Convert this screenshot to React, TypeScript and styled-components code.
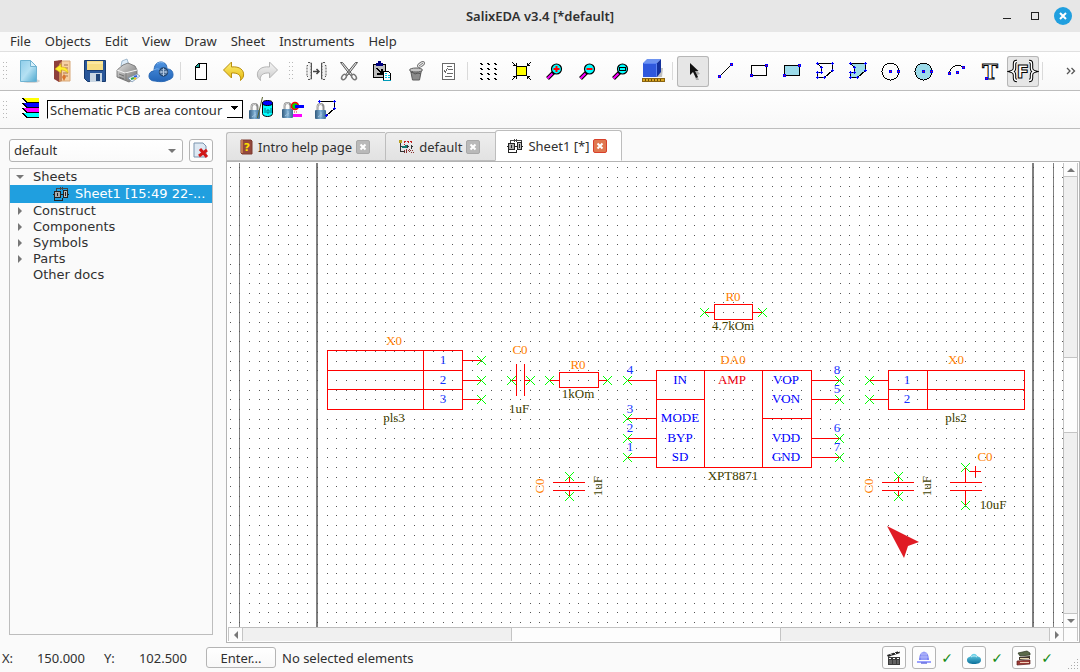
import React from "react";
import styled, { createGlobalStyle, css } from "styled-components";

const UI = `"Noto Sans", "Open Sans", sans-serif`;

const GlobalStyle = createGlobalStyle`
  * { box-sizing: border-box; }
  body { margin: 0; background: #fafafa; color: #303030; font: 13px/16px ${UI}; }
  button, select { font: inherit; color: inherit; margin: 0; padding: 0; }
  svg { display: block; }
`;

const Window = styled.div`
  display: flex;
  flex-direction: column;
  min-height: 100vh;
  background: #fafafa;
`;

/* ---------- title and menu ---------- */

const TitleBar = styled.header`
  display: grid;
  grid-template-columns: 1fr auto 1fr;
  align-items: center;
  height: 32px;
  background: #e7e7e7;
`;

const Title = styled.h1`
  grid-column: 2;
  margin: 0;
  font-size: 13px;
  line-height: 16px;
  font-weight: 600;
`;

const WindowButtons = styled.div`
  display: flex;
  justify-content: flex-end;
  align-items: center;
  gap: 10px;
  padding-right: 8px;
`;

const WindowButton = styled.button`
  width: 18px;
  height: 18px;
  border: 0;
  background: none;
`;

const MenuBar = styled.nav`
  display: flex;
  align-items: center;
  gap: 14px;
  height: 20px;
  padding: 0 10px 2px;
  border-bottom: 1px solid #e0e0e0;
`;

const MenuItem = styled.button`
  border: 0;
  background: none;
  white-space: nowrap;
`;

/* ---------- tool bars ---------- */

const ToolBar = styled.div<{ $tall?: boolean }>`
  display: flex;
  align-items: center;
  gap: 1px;
  height: ${(p) => (p.$tall ? 39 : 38)}px;
  border-bottom: 1px solid #bdbdbd;
  background: linear-gradient(#ffffff, #f8f8f8);
`;

const Handle = styled.span<{ $wide?: boolean }>`
  display: flex;
  justify-content: center;
  width: ${(p) => (p.$wide ? 15 : 12)}px;
`;

const Separator = styled.span`
  width: 6px;
  height: 18px;
  border-right: 3px solid transparent;
  border-left: 2px solid transparent;
  background: #dadada;
  background-clip: padding-box;
`;

const ToolButton = styled.button<{ $pressed?: boolean }>`
  flex: none;
  width: 32px;
  height: 31px;
  border: 0;
  border-radius: 3px;
  background: none;
  ${(p) =>
    p.$pressed &&
    css`
      background: #e6e6e6;
      box-shadow: inset 0 0 0 1px #b6b6b6;
    `}
`;

const More = styled.button`
  margin-left: auto;
  padding-right: 4px;
  border: 0;
  background: none;
`;

const LayerBox = styled.div`
  position: relative;
  width: 196px;
  height: 19px;
  margin-left: 1px;
  border: 1px solid #000;
  border-bottom-color: #fff;
  background: #fff;
`;

const LayerSelect = styled.select`
  appearance: none;
  width: 100%;
  height: 17px;
  border: 0;
  padding-left: 2px;
  background: none;
  line-height: 16px;
`;

const LayerArrow = styled.svg`
  position: absolute;
  right: -1px;
  top: -1px;
  pointer-events: none;
`;

/* ---------- body ---------- */

const Body = styled.main`
  flex: 1;
  display: flex;
  min-height: 0;
`;

const Side = styled.aside`
  flex: none;
  display: flex;
  flex-direction: column;
  gap: 6px;
  width: 226px;
  padding: 10px 13px 8px 9px;
`;

const ProjectRow = styled.div`
  display: flex;
  gap: 6px;
`;

const ProjectBox = styled.div`
  position: relative;
  flex: 1;
  svg {
    position: absolute;
    right: 7px;
    top: 8px;
    pointer-events: none;
  }
`;

const ProjectSelect = styled.select`
  appearance: none;
  width: 100%;
  height: 23px;
  padding: 0 0 2px 4px;
  border: 1px solid #b4b4b4;
  border-radius: 3px;
  background: linear-gradient(#ffffff, #fafafa);
`;

const SmallButton = styled.button`
  display: grid;
  place-items: center;
  width: 24px;
  height: 23px;
  border: 1px solid #b4b4b4;
  border-radius: 3px;
  background: #fdfdfd;
`;

const Tree = styled.ul`
  flex: 1;
  margin: 0;
  padding: 0;
  list-style: none;
  border: 1px solid #bdbdbd;
  font: 13px/16px "DejaVu Sans", sans-serif;
`;

const TreeRow = styled.li<{ $selected?: boolean }>`
  display: flex;
  align-items: center;
  gap: ${(p) => (p.$selected ? 6 : 5)}px;
  height: ${(p) => (p.$selected ? 18 : 16)}px;
  padding-left: ${(p) => (p.$selected ? 43 : 6)}px;
  white-space: nowrap;
  background: ${(p) => (p.$selected ? "#209fdf" : "none")};
  color: ${(p) => (p.$selected ? "#fff" : "inherit")};
`;

const TreeMark = styled.span`
  width: 12px;
  height: 9px;
`;

const Document = styled.section`
  flex: 1;
  display: flex;
  flex-direction: column;
  min-width: 0;
`;

const Tabs = styled.div`
  display: flex;
  align-items: flex-end;
  height: 32px;
`;

const Tab = styled.div<{ $active?: boolean }>`
  display: flex;
  align-items: center;
  gap: 4px;
  height: 29px;
  padding: 0 15px 0 12px;
  border: 1px solid #bdbdbd;
  border-right-width: 0;
  border-radius: 3px 0 0 0;
  background: linear-gradient(#eeeeee, #e2e2e2);
  ${(p) =>
    p.$active &&
    css`
      height: 31px;
      padding: 0 14px 0 11px;
      border-right-width: 1px;
      border-bottom-color: #fff;
      border-radius: 3px 3px 0 0;
      background: #fff;
    `}
`;

const TabLabel = styled.button`
  display: flex;
  align-items: center;
  gap: 5px;
  border: 0;
  background: none;
  white-space: nowrap;
`;

const TabClose = styled.button<{ $active?: boolean }>`
  display: grid;
  place-items: center;
  width: 14px;
  height: 14px;
  border: 1px solid ${(p) => (p.$active ? "#d8402a" : "#a8a8a8")};
  border-radius: 2px;
  background: ${(p) => (p.$active ? "#e07850" : "#b9b9b9")};
`;

const Pane = styled.div`
  flex: 1;
  display: grid;
  grid-template-columns: minmax(0, 1fr) 15px;
  grid-template-rows: minmax(0, 1fr) 15px;
  border: 1px solid #b4b4b4;
  border-width: 1px 1px 1px 2px;
  outline: 1px solid #fff;
  outline-offset: -2px;
  padding: 1px 1px 0 1px;
  background: #fff;
`;

const Canvas = styled.svg`
  width: 100%;
  height: 100%;
  background: #fff;
  text {
    font: 13px "Liberation Serif", serif;
    text-anchor: middle;
  }
`;

const Scroll = styled.div<{ $vertical?: boolean }>`
  display: flex;
  flex-direction: ${(p) => (p.$vertical ? "column" : "row")};
  background: #f0f0f0;
  border: 0 solid #bdbdbd;
  border-width: ${(p) => (p.$vertical ? "0 1px 0 1px" : "1px 0")};
`;

const ScrollButton = styled.button`
  display: grid;
  place-items: center;
  width: 13px;
  height: 13px;
  border: 0;
  background: #fcfcfc;
  box-shadow: 0 0 0 1px #c4c4c4;
`;

const Track = styled.span<{ $grow: number }>`
  flex: ${(p) => p.$grow} 1 0;
`;

const Thumb = styled(Track)`
  background: #fdfdfd;
  box-shadow: 0 0 0 1px #c4c4c4;
`;

const Corner = styled.div`
  border: 1px solid #c4c4c4;
  background: #fcfcfc;
`;

/* ---------- status bar ---------- */

const StatusBar = styled.footer`
  display: flex;
  align-items: center;
  height: 29px;
  padding-left: 2px;
`;

const Coordinate = styled.div`
  display: flex;
  justify-content: space-between;
  width: 83px;
  margin-right: 19px;
`;

const EnterButton = styled.button`
  width: 70px;
  height: 21px;
  margin-right: 6px;
  border: 1px solid #b4b4b4;
  border-radius: 3px;
  background: linear-gradient(#ffffff, #f8f8f8);
`;

const StatusIcons = styled.div`
  display: flex;
  align-items: center;
  gap: 6px;
  margin-left: auto;
`;

const Check = styled.span`
  width: 14px;
  margin: 0 2px 0 -2px;
  text-align: center;
  color: #128a12;
  font: 14px/16px "DejaVu Sans", sans-serif;
`;

/* ---------- icons ---------- */

const Icon = ({ children, crisp }: { children: React.ReactNode; crisp?: boolean }) => (
  <svg width="32" height="31" viewBox="0 0 32 31" fill="none" shapeRendering={crisp ? "crispEdges" : undefined}>
    {children}
  </svg>
);

const Node = ({ x, y }: { x: number; y: number }) => (
  <>
    <rect x={x - 1} y={y - 1} width="3" height="3" fill="#00f" />
    <rect x={x} y={y} width="1" height="1" fill="#f00" />
  </>
);

const Plus = ({ x, y }: { x: number; y: number }) => (
  <path d={`M${x - 1} ${y + 0.5}h3M${x + 0.5} ${y - 1}v3`} stroke="#00f" />
);

const Lock = ({ x, y }: { x: number; y: number }) => (
  <g transform={`translate(${x} ${y})`}>
    <path d="M2.500 8V4a3 3 0 0 1 6 0v4" stroke="#8d8d8d" strokeWidth="2" />
    <path d="M2 8V4a3.500 3.500 0 0 1 5-2.500" stroke="#d6d6d6" strokeWidth="1" />
    <rect x="0" y="7" width="11" height="9" rx="1" fill="url(#lockBody)" />
    <path d="M6 9v5M3 14l4-3" stroke="#9fc3de" />
  </g>
);

const Grip = () => (
  <svg width="6" height="18" shapeRendering="crispEdges">
    {[1, 5, 9, 13, 17].map((y) => (
      <path key={y} d={`M0 ${y - 0.5}h1M3 ${y - 0.5}h1`} stroke="#b8b8b8" />
    ))}
  </svg>
);

const Gradients = () => (
  <svg width="0" height="0" style={{ position: "absolute" }} aria-hidden="true">
    <defs>
      <linearGradient id="page" x1="0" y1="0" x2="1" y2="1">
        <stop offset="0" stopColor="#8fcdea" />
        <stop offset=".5" stopColor="#b5e1f3" />
        <stop offset="1" stopColor="#4fa9cf" />
      </linearGradient>
      <linearGradient id="lockBody" x1="0" x2="1">
        <stop offset="0" stopColor="#31597c" />
        <stop offset=".5" stopColor="#7fb0d4" />
        <stop offset="1" stopColor="#3a6a94" />
      </linearGradient>
      <linearGradient id="gold" x1="0" y1="0" x2="0" y2="1">
        <stop offset="0" stopColor="#fff27a" />
        <stop offset="1" stopColor="#e5b80b" />
      </linearGradient>
      <linearGradient id="silver" x1="0" y1="0" x2="0" y2="1">
        <stop offset="0" stopColor="#f6f6f6" />
        <stop offset="1" stopColor="#c9c9c9" />
      </linearGradient>
      <linearGradient id="sky" x1="0" y1="0" x2="0" y2="1">
        <stop offset="0" stopColor="#4f93e0" />
        <stop offset="1" stopColor="#2264b8" />
      </linearGradient>
      <linearGradient id="metal" x1="0" y1="0" x2="1" y2="1">
        <stop offset="0" stopColor="#e2e2e2" />
        <stop offset="1" stopColor="#6d6d6d" />
      </linearGradient>
      <linearGradient id="teal" x1="0" y1="0" x2="0" y2="1">
        <stop offset="0" stopColor="#6fd8ee" />
        <stop offset="1" stopColor="#0a6f9a" />
      </linearGradient>
    </defs>
  </svg>
);

const NewIcon = () => (
  <Icon>
    <ellipse cx="18" cy="25" rx="9" ry="2" fill="#bbb" opacity=".6" />
    <path d="M7.500 4.500h10l6 6v15h-16z" fill="url(#page)" stroke="#6fb3d2" />
    <path d="M17.500 4.500v6h6z" fill="#d8f0fa" stroke="#6fb3d2" />
  </Icon>
);

const ImportIcon = () => (
  <Icon>
    <path d="M12 5h12v20H12z" fill="#f6d0a2" stroke="#d8a878" />
    <path d="M18 9h4M19 12h3M17 17h5M18 20h4" stroke="#a8744a" />
    <path d="M8 5l8-1v20l-3 2-5-3z" fill="#8e3f3b" />
    <path d="M13 8l3-3v20l-3 1z" fill="#c98a5c" />
    <path d="M9 13l6-5v3c5 0 7 2 7 6-2-2-4-3-7-3v3z" fill="#ffee2e" stroke="#d0a818" strokeWidth=".6" />
    <path d="M18 18l2 3-2 4-2-4z" fill="#d9742e" />
  </Icon>
);

const SaveIcon = () => (
  <Icon>
    <path d="M5.500 4.500h21v21h-18l-3-3z" fill="#2a5799" stroke="#173a6e" />
    <rect x="8" y="5" width="16" height="9" fill="#f6dd84" />
    <path d="M8 7h16" stroke="#fff3c0" />
    <rect x="11" y="17" width="12" height="9" fill="#c9d6e2" />
    <rect x="17" y="18" width="4" height="7" fill="#1f4478" />
    <path d="M8 14.500h16" stroke="#173a6e" />
  </Icon>
);

const PrintIcon = () => (
  <Icon>
    <path d="M9 10l1-5 5-2 2 6z" fill="#dcebf8" stroke="#8ea9c2" strokeWidth=".8" />
    <path d="M5 14l6-5 5-2 7 3 2 4v7l-8 5-12-5z" fill="url(#metal)" stroke="#6a6a6a" strokeWidth=".8" />
    <path d="M5 14l8 3 12-3" stroke="#f5f5f5" />
    <path d="M14 17v8" stroke="#7d7d7d" />
    <path d="M7 18l5 2M7 21l5 2" stroke="#555" strokeWidth=".7" />
    <path d="M16 22l9-4 3 2-8 6z" fill="#e8f2fb" stroke="#6d8aa8" strokeWidth=".7" />
    <path d="M19 23l3-1" stroke="#27a844" strokeWidth="2" />
    <path d="M22 21l3-1" stroke="#2d5be0" strokeWidth="2" />
    <path d="M22 23l2-1" stroke="#f0c420" strokeWidth="2" />
  </Icon>
);

const CloudIcon = () => (
  <Icon>
    <path
      d="M10 25c-4 0-6-2-6-5s2-5 5-5c0-5 2-9 7-9 4 0 6 3 6 7 4 0 6 2 6 6 0 3-2 4-5 5-3 2-9 2-13 1z"
      fill="url(#sky)"
      stroke="#2a69b5"
    />
    <path d="M9 14c3-2 5-1 6 0M12 8c2-2 5-2 7-1" stroke="#7db4ee" />
    <circle cx="18.500" cy="16" r="4" fill="#7f9fc4" stroke="#23466f" strokeWidth="1.500" />
    <path d="M16 13.500l5 5M21 13.500l-5 5" stroke="#23466f" />
    <path d="M18.500 12v8M14.500 16h8" stroke="#c5d8ee" strokeWidth=".8" />
  </Icon>
);

const SheetIcon = () => (
  <Icon crisp>
    <path d="M13.500 7.500h8v16h-11v-13z" fill="#fff" stroke="#000" />
    <path d="M14 7v4h-4z" fill="#1aa39a" />
    <path d="M10 11.500h4.500V7" stroke="#000" />
  </Icon>
);

const ArrowShape = ({ fill, stroke }: { fill: string; stroke: string }) => (
  <path
    d="M5.500 14l8-8v5c8-1 13 3 12 9-.5 2-1.500 3-3 4.500 1-5-2.500-8-9-7.500v5z"
    fill={fill}
    stroke={stroke}
    strokeLinejoin="round"
  />
);

const UndoIcon = () => (
  <Icon>
    <ArrowShape fill="url(#gold)" stroke="#b98f10" />
  </Icon>
);

const RedoIcon = () => (
  <Icon>
    <g transform="translate(32 0) scale(-1 1)">
      <ArrowShape fill="url(#silver)" stroke="#b5b5b5" />
    </g>
  </Icon>
);

const MirrorIcon = () => (
  <Icon>
    <path d="M8.500 6.500h2v17h-2zM23.500 6.500h2v17h-2z" fill="#eee" />
    <path d="M8 6.500h3v17H8M8 9.500h-1v11h1M25 6.500h-3v17h3M25 9.500h1v11h-1" stroke="#555" strokeDasharray="2 1" />
    <path d="M11.500 7v16M21.500 7v16" stroke="#555" />
    <path d="M13 15.500h6M16.500 13l2.500 2.500-2.500 2.500" stroke="#444" strokeWidth="1.500" />
  </Icon>
);

const CutIcon = () => (
  <Icon>
    <path d="M7.500 6.500h2l9 11-1 2zM24.500 6.500h-2l-9 11 1 2z" fill="#e8e8e8" stroke="#555" />
    <ellipse cx="11" cy="21" rx="2" ry="3" transform="rotate(35 11 21)" stroke="#777" strokeWidth="1.500" />
    <ellipse cx="21" cy="21" rx="2" ry="3" transform="rotate(-35 21 21)" stroke="#777" strokeWidth="1.500" />
  </Icon>
);

const PasteIcon = () => (
  <Icon crisp>
    <path d="M7.500 8.500h12v13h-12z" fill="#bdbdbd" stroke="#000" />
    <path d="M10 7h2V5h3v2h2v3h-7z" fill="#000080" />
    <path d="M10.500 12l5 5M16 13v5h-5" stroke="#000" strokeWidth="2" />
    <path d="M17.500 15.500h5l2 2v7h-7z" fill="#fff" stroke="#000" />
    <path d="M19 17.500h3M19 19.500h5M19 21.500h5" stroke="#00c8e8" strokeDasharray="2 1" />
    <path d="M17 24.500h8" stroke="#009ab8" />
  </Icon>
);

const BucketIcon = () => (
  <Icon>
    <path d="M11.500 14h11l-2 10h-7z" fill="#8b8b8b" stroke="#5d5d5d" />
    <ellipse cx="17" cy="14" rx="6.500" ry="2" fill="#c6c6c6" stroke="#5d5d5d" />
    <path d="M12 17l1-1 3 2 3-1 3 1" stroke="#555" />
    <ellipse cx="22" cy="8.500" rx="4" ry="2" transform="rotate(-35 22 8.500)" fill="#eee" stroke="#777" />
    <path d="M20 10l4-3" stroke="#777" />
  </Icon>
);

const ListIcon = () => (
  <Icon crisp>
    <path d="M10.500 7.500h12v16h-12z" fill="#fff" stroke="#6a6a6a" />
    <path d="M15 10.500h5M16 13.500h5M15 17.500h6M13 20.500h7" stroke="#6a6a6a" />
    <path d="M12 14l1.500 2 2-4" stroke="#6a6a6a" />
  </Icon>
);

const GridIcon = () => (
  <Icon crisp>
    {[8, 15, 22].map((x) =>
      [7, 12, 17, 22].map((y) => <path key={`${x}-${y}`} d={`M${x} ${y}h2v1h1v1h-2v-1h-1z`} fill="#000" />)
    )}
  </Icon>
);

const FitIcon = () => (
  <Icon crisp>
    <rect x="11.500" y="10.500" width="10" height="9" fill="#ff0" stroke="#000" />
    <path
      d="M7 6l4 4M8 9.500h3V7M26 6l-4 4M25 9.500h-3V7M7 24l4-4M8 20.500h3V23M26 24l-4-4M25 20.500h-3V23"
      stroke="#000"
    />
  </Icon>
);

const Magnifier = ({ children }: { children: React.ReactNode }) => (
  <Icon>
    <path d="M9.500 22.500l6-6" stroke="#000" strokeWidth="4" />
    <path d="M9.500 22.500l5-5" stroke="#f0f" strokeWidth="2" />
    <circle cx="18.500" cy="13" r="5" fill="#0ff" stroke="#000" strokeWidth="1.200" />
    {children}
  </Icon>
);

const CubeIcon = () => (
  <Icon>
    <path d="M20 12l6 0-1 9h-5z" fill="#999" opacity=".6" />
    <path d="M6 7l4-4h14l-4 4z" fill="#6d93f0" />
    <path d="M6 7h14v14H6z" fill="#2f58dc" />
    <path d="M20 7l4-4v13l-4 5z" fill="#14319c" />
    <path d="M6.500 7.500h13v13" stroke="#5b83f2" />
    <rect x="5.500" y="22.500" width="22" height="3" fill="#d8a520" stroke="#8a6410" />
    <path d="M8.500 23v2M11.500 23v2M14.500 23v2M17.500 23v2M20.500 23v2M23.500 23v2" stroke="#6d4d08" />
  </Icon>
);

const PointerIcon = () => (
  <Icon>
    <path d="M15 9l8 9-3 1 2 5h-3z" fill="#aaa" />
    <path d="M13 7v12l3-3 3 6 2-1-3-6h3.500z" fill="#111" />
  </Icon>
);

const LineIcon = () => (
  <Icon crisp>
    <path d="M9.500 20.500l12-12" stroke="#000" />
    <Node x={9} y={20} />
    <Node x={21} y={8} />
  </Icon>
);

const RectIcon = ({ fill = "none" }: { fill?: string }) => (
  <Icon crisp>
    <rect x="8.500" y="9.500" width="15" height="10" fill={fill} stroke="#000" />
    <Node x={8} y={19} />
    <Node x={23} y={9} />
  </Icon>
);

const polygon = [
  [8, 7],
  [23, 7],
  [23, 14],
  [15, 21],
  [8, 21],
  [8, 16],
  [12, 16],
  [12, 11],
];

const PolyIcon = ({ fill = "none" }: { fill?: string }) => (
  <Icon crisp>
    <polygon points={polygon.map(([x, y]) => `${x + 0.5},${y + 0.5}`).join(" ")} fill={fill} stroke="#000" />
    {polygon.map(([x, y]) => (
      <Plus key={`${x}-${y}`} x={x} y={y} />
    ))}
  </Icon>
);

const CircleIcon = ({ fill = "none" }: { fill?: string }) => (
  <Icon crisp>
    <circle cx="15.500" cy="15.500" r="8.500" fill={fill} stroke="#000" />
    <Node x={15} y={15} />
    <Node x={23} y={15} />
  </Icon>
);

const ArcIcon = () => (
  <Icon crisp>
    <path d="M8.500 17.500a8.500 8.500 0 0 1 14-6" stroke="#000" />
    <Node x={8} y={17} />
    <Node x={16} y={16} />
    <Node x={22} y={11} />
  </Icon>
);

const TextIcon = () => (
  <Icon>
    <text
      x="16"
      y="23"
      textAnchor="middle"
      fontFamily="DejaVu Serif"
      fontWeight="700"
      fontSize="21"
      fill="#fff"
      stroke="#000"
    >
      T
    </text>
    <Node x={12} y={22} />
  </Icon>
);

const braces =
  "M10 5.500H9.500C7.500 5.500 7.500 7 7.500 8v4c0 2-1 3-2.500 3.500 1.500.5 2.500 1.500 2.500 3.500v3c0 1.500.5 2.500 2.500 2.500M22 5.500h.5c2 0 2 1.500 2 2.500v4c0 2 1 3 2.500 3.500-1.500.5-2.500 1.500-2.500 3.500v3c0 1.500-.5 2.500-2.500 2.500";

const FieldIcon = () => (
  <Icon>
    <path d={braces} stroke="#000" strokeWidth="3.400" />
    <path d={braces} stroke="#fff" strokeWidth="1.400" />
    <text
      x="16"
      y="22"
      textAnchor="middle"
      fontFamily="DejaVu Sans"
      fontWeight="700"
      fontSize="18"
      fill="#fff"
      stroke="#000"
    >
      F
    </text>
  </Icon>
);

const LayersIcon = () => (
  <Icon crisp>
    {["#ff0", "#00f", "#f0f", "#0ff"].map((c, i) => (
      <g key={c} transform={`translate(0 ${i * 5})`}>
        <path d="M10 4h16v4H14z" fill={c} />
        <path d="M9 4.500h2M10 4.500l4 4h12" stroke="#000" />
      </g>
    ))}
  </Icon>
);

const LockNetIcon = () => (
  <Icon>
    <Lock x={5} y={9} />
    <path d="M18.500 3l-5 21" stroke="#55602a" />
    <path d="M18.500 9.500v10c0 4 10 4 10 0v-10z" fill="#0ff" stroke="#000" />
    <ellipse cx="23.500" cy="9" rx="5" ry="2.500" fill="#00f" stroke="#000" />
    <path d="M21 14v5M23 16v3h2v-3h-2M27 14v5" stroke="#078" />
  </Icon>
);

const LockLayerIcon = () => (
  <Icon>
    <Lock x={5} y={8} />
    <circle cx="18" cy="12" r="3.500" fill="#0d0" stroke="#f00" strokeWidth="1.500" />
    <rect x="18" y="11" width="9" height="3" fill="#00f" />
    <rect x="16" y="20" width="9" height="3" fill="#f0f" />
    <path d="M17 18h4" stroke="#c33" strokeDasharray="1 1" />
  </Icon>
);

const LockAreaIcon = () => (
  <Icon>
    <path d="M9.500 7.500h15v7l-8 7" stroke="#000" shapeRendering="crispEdges" />
    <Lock x={5} y={9} />
    <Plus x={9} y={7} />
    <Plus x={24} y={7} />
    <Plus x={24} y={14} />
    <Plus x={16} y={21} />
  </Icon>
);

const SheetGlyph = () => (
  <svg width="16" height="14" viewBox="0 0 16 14" fill="none" shapeRendering="crispEdges">
    <path d="M3 1.500h11v2M3 1.500v3M7 0v3M9 0v3" stroke="#444" />
    <rect x="1.500" y="4.500" width="6" height="6" fill="#aaa" stroke="#222" />
    <rect x="10.500" y="3.500" width="4" height="7" fill="#bbb" stroke="#222" />
    <path d="M4.500 6v3M12.500 5v4M0 7.500h2M7 7.500h4M14 7.500h2M1.500 10v3h8v-2" stroke="#222" />
  </svg>
);

const BookGlyph = () => (
  <svg width="14" height="16" viewBox="0 0 14 16" fill="none">
    <path d="M2 1h10l1 1v13H3l-1-1z" fill="#94483c" stroke="#7c3a2e" />
    <path d="M2 1h2v13H2z" fill="#c27a52" />
    <text x="8" y="12" textAnchor="middle" fontFamily="DejaVu Sans" fontSize="11" fontWeight="700" fill="#ffe100">
      ?
    </text>
  </svg>
);

const TreeGlyph = () => (
  <svg width="16" height="14" viewBox="0 0 16 14" fill="none" shapeRendering="crispEdges">
    <path d="M2.500 3v8.500H7M2.500 6.500H7" stroke="#333" />
    <rect x="1" y="0" width="3" height="3" fill="#b8a020" />
    <path d="M6 1.500h9M6.500 1v4M10.500 1v3M13.500 1v3" stroke="#c02020" strokeDasharray="2 1" />
    <path d="M4 6.500h4M7.500 5v3" stroke="#127a70" strokeWidth="2" />
    <path d="M10 6.500h1M13 6.500h2M9.500 5v3M13.500 5v4" stroke="#333" />
    <path d="M6 10.500h9M8.500 9v4M11.500 9v4M6 12.500h3M13 12.500h3" stroke="#8a3030" strokeDasharray="1 1" />
  </svg>
);

const CloseCross = () => (
  <svg width="8" height="8" viewBox="0 0 8 8">
    <path d="M1.500 1.500l5 5M6.500 1.500l-5 5" stroke="#fff" strokeWidth="2" />
  </svg>
);

const triangles = {
  left: "M6 0v8L2 4z",
  right: "M2 0v8l4-4z",
  up: "M0 6h8L4 2z",
  down: "M0 2h8L4 6z",
};

const Triangle = ({ dir }: { dir: keyof typeof triangles }) => (
  <svg width="8" height="8" viewBox="0 0 8 8">
    <path d={triangles[dir]} fill="#777" />
  </svg>
);

/* ---------- schematic ---------- */

const PITCH = 9.68;
const gridDots = (() => {
  let d = "";
  for (let row = 0; row < 110; row++) {
    const y = Math.floor(167.4 + row * PITCH);
    for (let col = -1; col < 220; col++) {
      d += `M${Math.floor(239.9 + col * PITCH)} ${y + 0.5}h1`;
    }
  }
  return d;
})();

const wires = [
  "M327.500 350.500h135v59h-135zM327 370.500h136M327 389.500h136M423.500 350v60",
  "M463 360.500h19M463 380.500h19M463 399.500h19",
  "M516.500 364v32M524.500 364v32M511 380.500h5M525 380.500h6",
  "M559.500 372.500h39v15h-39zM549 380.500h10M599 380.500h9",
  "M553 482.500h32M553 490.500h32M569.500 477v6M569.500 491v6",
  "M714.500 304.500h38v15h-38zM705 312.500h9M753 312.500h10",
  "M656.500 370.500h155v97h-155zM704.500 370v98M762.500 370v98M656 399.500h49M762 418.500h50",
  "M628 380.500h28M628 418.500h28M628 438.500h28M628 457.500h28",
  "M812 380.500h28M812 399.500h28M812 438.500h28M812 457.500h28",
  "M888.500 370.500h136v39h-136zM888 389.500h137M927.500 370v40M870 380.500h18M870 399.500h18",
  "M882 482.500h32M882 490.500h32M898.500 477v6M898.500 491v6",
  "M950 482.500h32M950 490.500h32M965.500 468v15M965.500 491v15M970 471.500h11M975.500 466v11",
].join("");

const pins = [
  [481, 360], [481, 380], [481, 399],
  [511, 380], [530, 380], [549, 380], [607, 380],
  [569, 476], [569, 496], [704, 312], [762, 312],
  [627, 380], [627, 418], [627, 438], [627, 457],
  [839, 380], [839, 399], [839, 438], [839, 457],
  [869, 380], [869, 399], [898, 476], [898, 496],
  [965, 467], [965, 505],
];

const pinMarks = pins.map(([x, y]) => `M${x - 4} ${y - 4}l9 9M${x + 5} ${y - 4}l-9 9`).join("");

const ORANGE = "#ff8000";
const OLIVE = "#404000";
const BLUE = "#0000ff";
const NUMBER = "#1433ff";

type Label = [string, number, number, string, boolean?];
const labels: Label[] = [
  ["X0", 394, 345, ORANGE], ["pls3", 394, 422, OLIVE],
  ["1", 443, 364, NUMBER], ["2", 443, 384, NUMBER], ["3", 443, 403, NUMBER],
  ["C0", 520, 354, ORANGE], ["1uF", 519, 413, OLIVE],
  ["R0", 578, 369, ORANGE], ["1kOm", 578, 398, OLIVE],
  ["C0", 544, 486, ORANGE, true], ["1uF", 602, 486, OLIVE, true],
  ["R0", 733, 301, ORANGE], ["4.7kOm", 733, 330, OLIVE],
  ["DA0", 733, 364, ORANGE], ["XPT8871", 733, 480, OLIVE],
  ["4", 630, 374, NUMBER], ["3", 630, 413, NUMBER], ["2", 630, 432, NUMBER], ["1", 630, 451, NUMBER],
  ["8", 837, 374, NUMBER], ["5", 837, 393, NUMBER], ["6", 837, 432, NUMBER], ["7", 837, 451, NUMBER],
  ["IN", 680, 384, BLUE], ["MODE", 680, 422, BLUE], ["BYP", 680, 442, BLUE], ["SD", 680, 461, BLUE],
  ["AMP", 732, 384, "#f00010"],
  ["VOP", 786, 384, BLUE], ["VON", 786, 403, BLUE], ["VDD", 786, 442, BLUE], ["GND", 786, 461, BLUE],
  ["X0", 956, 364, ORANGE], ["pls2", 956, 422, OLIVE],
  ["1", 907, 384, NUMBER], ["2", 907, 403, NUMBER],
  ["C0", 873, 486, ORANGE, true], ["1uF", 931, 486, OLIVE, true],
  ["C0", 985, 461, ORANGE], ["10uF", 993, 509, OLIVE],
];

const Schematic = () => (
  <Canvas>
    <g transform="translate(-229 -163)">
      <g shapeRendering="crispEdges" fill="none">
        <path d="M239.500 163v2000M1053.500 163v2000" stroke="#808080" />
        <path d="M317 163v2000M1033 163v2000" stroke="#808080" strokeWidth="2" />
        <path d={gridDots} stroke="#555" />
        <path d={wires} stroke="#f00" />
      </g>
      <path d={pinMarks} stroke="#0f0" fill="none" />
      {labels.map(([text, x, y, color, turned]) => (
        <text key={`${text}-${x}-${y}`} x={x} y={y} fill={color} transform={turned ? `rotate(-90 ${x} ${y})` : undefined}>
          {text}
        </text>
      ))}
      <path d="M887 526l32 16-11 4-4 12z" fill="#e01b24" />
    </g>
  </Canvas>
);

/* ---------- page ---------- */

const SKY = "#9cdbea";

type Tool = [string, React.ReactNode, boolean?] | "sep" | "grip";
const tools: Tool[] = [
  ["New", <NewIcon />],
  ["Open", <ImportIcon />],
  ["Save", <SaveIcon />],
  ["Print", <PrintIcon />],
  ["Cloud", <CloudIcon />],
  "sep",
  ["Sheet", <SheetIcon />],
  ["Undo", <UndoIcon />],
  ["Redo", <RedoIcon />],
  "grip",
  ["Mirror", <MirrorIcon />],
  ["Cut", <CutIcon />],
  ["Paste", <PasteIcon />],
  ["Delete", <BucketIcon />],
  ["Properties", <ListIcon />],
  "sep",
  ["Grid", <GridIcon />],
  ["Fit", <FitIcon />],
  ["Zoom in", <Magnifier><path d="M15.500 13h6M18.500 10v6" stroke="#f00" strokeWidth="2" /></Magnifier>],
  ["Zoom out", <Magnifier><path d="M15.500 13h6" stroke="#f00" strokeWidth="2" /></Magnifier>],
  ["Zoom window", <Magnifier><rect x="15.500" y="11.500" width="6" height="3" stroke="#000" /></Magnifier>],
  ["3D view", <CubeIcon />],
  "sep",
  ["Select", <PointerIcon />, true],
  ["Line", <LineIcon />],
  ["Rectangle", <RectIcon />],
  ["Filled rectangle", <RectIcon fill={SKY} />],
  ["Polygon", <PolyIcon />],
  ["Filled polygon", <PolyIcon fill={SKY} />],
  ["Circle", <CircleIcon />],
  ["Filled circle", <CircleIcon fill={SKY} />],
  ["Arc", <ArcIcon />],
  ["Text", <TextIcon />],
  ["Field", <FieldIcon />, true],
  "sep",
];

const menus = ["File", "Objects", "Edit", "View", "Draw", "Sheet", "Instruments", "Help"];
const folders = ["Construct", "Components", "Symbols", "Parts"];

export default function App() {
  return (
    <Window>
      <GlobalStyle />
      <Gradients />
      <TitleBar>
        <Title>SalixEDA v3.4 [*default]</Title>
        <WindowButtons>
          <WindowButton aria-label="Minimize">
            <svg width="18" height="18"><path d="M5 11.500h8" stroke="#222" /></svg>
          </WindowButton>
          <WindowButton aria-label="Maximize">
            <svg width="18" height="18"><rect x="5.500" y="5.500" width="7" height="7" fill="none" stroke="#222" /></svg>
          </WindowButton>
          <WindowButton aria-label="Close">
            <svg width="18" height="18">
              <circle cx="9" cy="9" r="9" fill="#209fdf" />
              <path d="M6 6l6 6M12 6l-6 6" stroke="#fff" strokeWidth="2" />
            </svg>
          </WindowButton>
        </WindowButtons>
      </TitleBar>
      <MenuBar>
        {menus.map((m) => (
          <MenuItem key={m}>{m}</MenuItem>
        ))}
      </MenuBar>
      <ToolBar $tall>
        <Handle><Grip /></Handle>
        {tools.map((t, i) =>
          t === "sep" ? (
            <Separator key={i} />
          ) : t === "grip" ? (
            <Handle key={i} $wide><Grip /></Handle>
          ) : (
            <ToolButton key={i} aria-label={t[0]} $pressed={t[2]}>{t[1]}</ToolButton>
          )
        )}
        <More aria-label="More tools">
          <svg width="10" height="8" fill="none">
            <path d="M1 1l3 3-3 3M5.500 1l3 3-3 3" stroke="#555" strokeWidth="1.300" />
          </svg>
        </More>
      </ToolBar>
      <ToolBar>
        <Handle><Grip /></Handle>
        <ToolButton aria-label="Layers"><LayersIcon /></ToolButton>
        <LayerBox>
          <LayerSelect aria-label="Layer">
            <option>Schematic PCB area contour</option>
          </LayerSelect>
          <LayerArrow width="16" height="18" shapeRendering="crispEdges">
            <path d="M0 17.500h15.500V0" stroke="#000" fill="none" />
            <path d="M4 6h7v1h-1v1h-1v1h-1v1h-1v-1h-1v-1h-1v-1h-1z" fill="#000" />
          </LayerArrow>
        </LayerBox>
        <ToolButton aria-label="Lock net"><LockNetIcon /></ToolButton>
        <ToolButton aria-label="Lock layer"><LockLayerIcon /></ToolButton>
        <ToolButton aria-label="Lock area"><LockAreaIcon /></ToolButton>
      </ToolBar>

      <Body>
        <Side>
          <ProjectRow>
            <ProjectBox>
              <ProjectSelect aria-label="Project">
                <option>default</option>
              </ProjectSelect>
              <Triangle dir="down" />
            </ProjectBox>
            <SmallButton aria-label="Close project">
              <svg width="16" height="17" viewBox="0 0 16 17" fill="none">
                <path d="M1 1h9l3 3v11H1z" fill="#dde8f3" stroke="#7a93ad" />
                <path d="M7 7l7 8M14 8l-8 6" stroke="#d11818" strokeWidth="3" />
              </svg>
            </SmallButton>
          </ProjectRow>
          <Tree>
            <TreeRow><TreeMark><Triangle dir="down" /></TreeMark>Sheets</TreeRow>
            <TreeRow $selected><SheetGlyph />Sheet1 [15:49 22-...</TreeRow>
            {folders.map((f) => (
              <TreeRow key={f}><TreeMark><Triangle dir="right" /></TreeMark>{f}</TreeRow>
            ))}
            <TreeRow><TreeMark />Other docs</TreeRow>
          </Tree>
        </Side>
        <Document>
          <Tabs>
            <Tab>
              <TabLabel><BookGlyph />Intro help page</TabLabel>
              <TabClose aria-label="Close Intro help page"><CloseCross /></TabClose>
            </Tab>
            <Tab>
              <TabLabel><TreeGlyph />default</TabLabel>
              <TabClose aria-label="Close default"><CloseCross /></TabClose>
            </Tab>
            <Tab $active>
              <TabLabel><SheetGlyph />Sheet1 [*]</TabLabel>
              <TabClose $active aria-label="Close Sheet1"><CloseCross /></TabClose>
            </Tab>
          </Tabs>
          <Pane>
            <Schematic />
            <Scroll $vertical>
              <ScrollButton aria-label="Scroll up"><Triangle dir="up" /></ScrollButton>
              <Track $grow={181} />
              <Thumb $grow={74} />
              <Track $grow={181} />
              <ScrollButton aria-label="Scroll down"><Triangle dir="down" /></ScrollButton>
            </Scroll>
            <Scroll>
              <ScrollButton aria-label="Scroll left"><Triangle dir="left" /></ScrollButton>
              <Track $grow={269} />
              <Thumb $grow={268} />
              <Track $grow={269} />
              <ScrollButton aria-label="Scroll right"><Triangle dir="right" /></ScrollButton>
            </Scroll>
            <Corner />
          </Pane>
        </Document>
      </Body>

      <StatusBar>
        <Coordinate><span>X:</span><span>150.000</span></Coordinate>
        <Coordinate><span>Y:</span><span>102.500</span></Coordinate>
        <EnterButton>Enter...</EnterButton>
        <span>No selected elements</span>
        <StatusIcons>
          <SmallButton aria-label="Record">
            <svg width="16" height="16" viewBox="0 0 16 16" fill="none">
              <path d="M2 7h12v8H2z" fill="#3a3a3a" />
              <path d="M1 5l12-4 1 2L2 7z" fill="#222" />
              <path d="M4 3.500l2 2M8 2l2 2M12 1l1 1M3 8.500h2M7 8.500h2M11 8.500h2" stroke="#fff" />
              <path d="M3 11h10M3 13h10" stroke="#888" strokeDasharray="3 1" />
            </svg>
          </SmallButton>
          <SmallButton aria-label="Network">
            <svg width="16" height="16" viewBox="0 0 16 16" fill="none">
              <path d="M3 10c0-11 10-11 10 0z" fill="#7d86f2" />
              <path d="M3 7h10M5 4h6M6 2v8M8 1v9M10 2v8" stroke="#c4c8ff" strokeWidth=".7" />
              <path d="M1 11h14v2H1z" fill="#9aa1ff" />
              <path d="M5 13h6" stroke="#6a72e0" strokeWidth="1.500" />
            </svg>
          </SmallButton>
          <Check>✓</Check>
          <SmallButton aria-label="Cloud storage">
            <svg width="16" height="16" viewBox="0 0 16 16" fill="none">
              <path d="M1 10c0-3 3-3 4-4 1-3 5-3 6 0 2 1 4 1 4 4s-3 4-7 4-7-1-7-4z" fill="url(#teal)" />
              <path d="M5 7c2-1.500 4-1.500 6 0" stroke="#c8f3fb" />
            </svg>
          </SmallButton>
          <Check>✓</Check>
          <SmallButton aria-label="Library">
            <svg width="16" height="16" viewBox="0 0 16 16" fill="none">
              <path d="M2 3l9-2 3 2v2L4 6z" fill="#5b6a4a" stroke="#26301c" strokeWidth=".7" />
              <path d="M3 7l11-1v3L3 10z" fill="#3f352a" />
              <path d="M4 8.500h9" stroke="#e8d9b0" />
              <path d="M1 11l13-1v4l-13 1z" fill="#9c3a35" stroke="#5a1d1a" strokeWidth=".7" />
              <path d="M4 12.500h9" stroke="#f0d0b8" />
            </svg>
          </SmallButton>
          <Check>✓</Check>
          <svg width="18" height="29" shapeRendering="crispEdges">
            <path
              d="M15 16.500h1M12 19.500h1M15 19.500h1M9 22.500h1M12 22.500h1M15 22.500h1M6 25.500h1M9 25.500h1M12 25.500h1M15 25.500h1"
              stroke="#aaa"
            />
          </svg>
        </StatusIcons>
      </StatusBar>
    </Window>
  );
}
